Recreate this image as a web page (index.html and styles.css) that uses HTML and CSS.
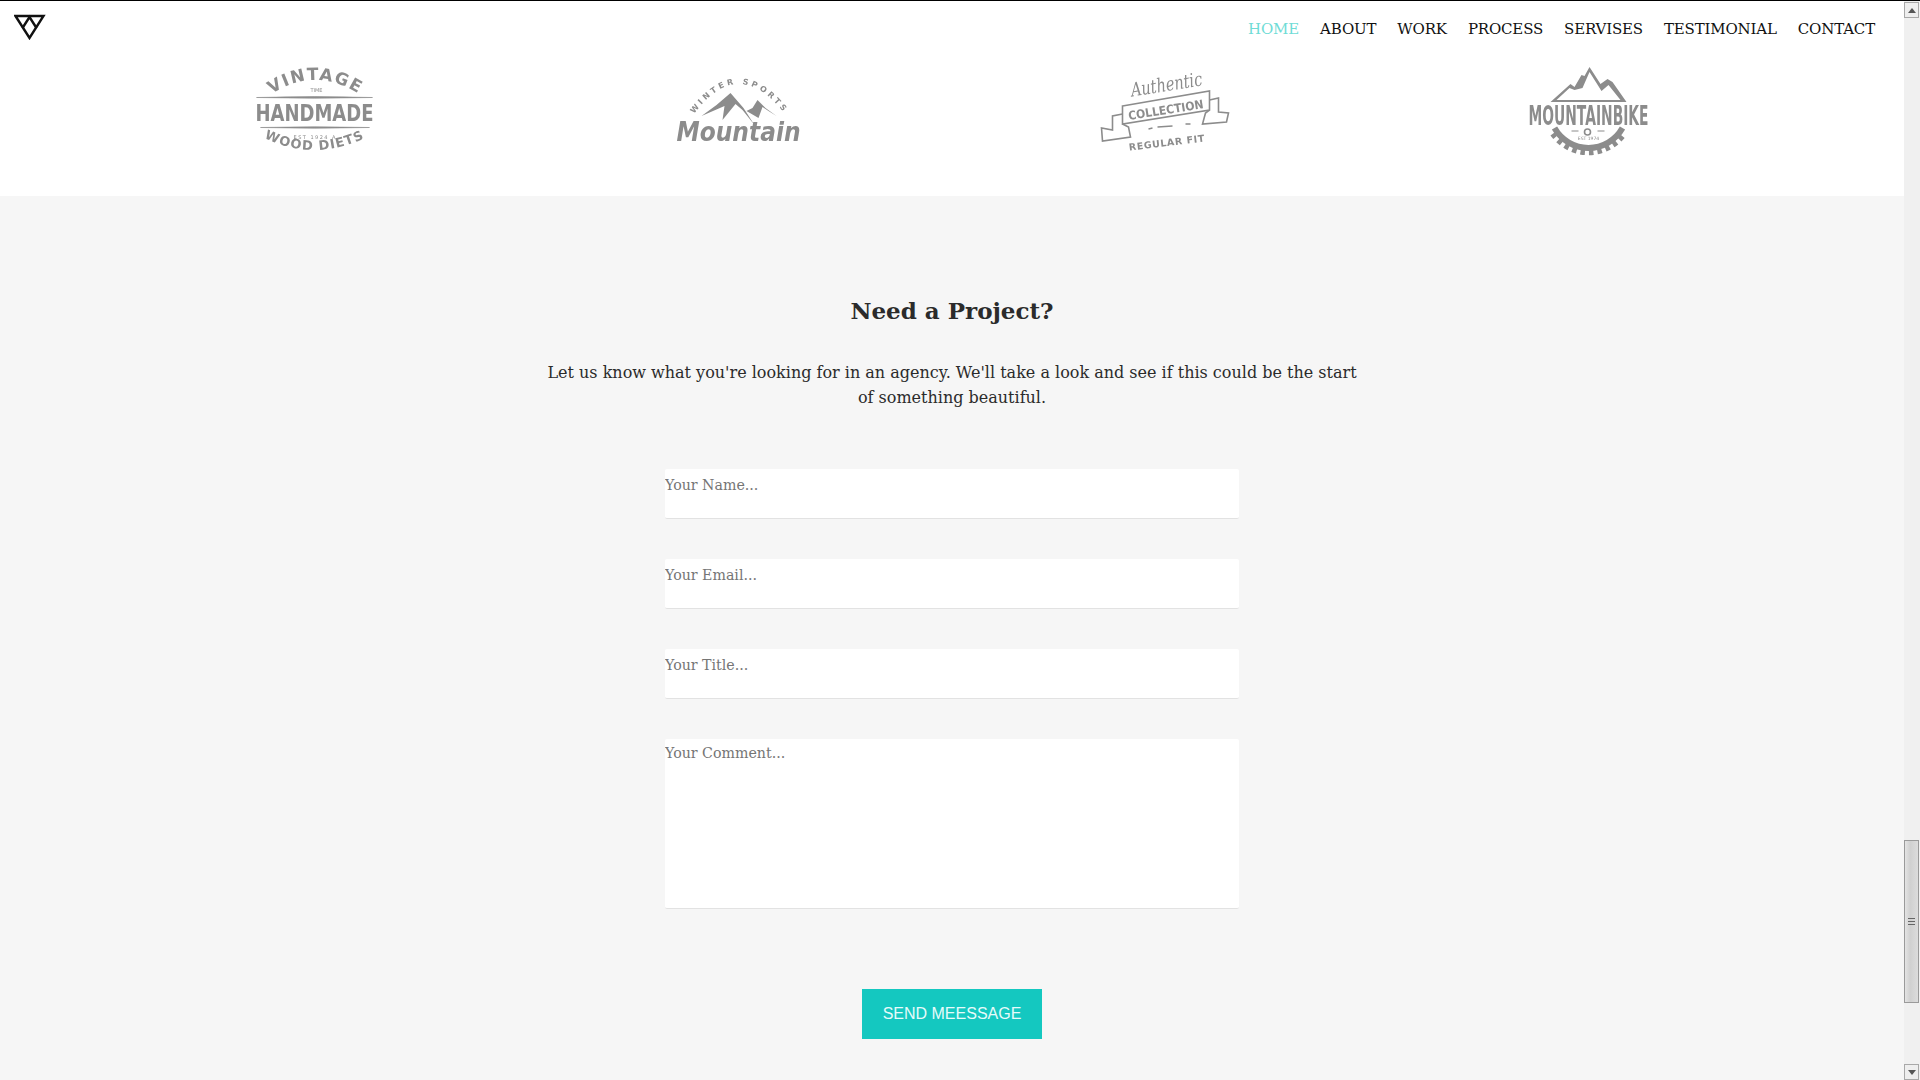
FILE: index.html
```html
<!DOCTYPE html>
<html lang="en">
<head>
  <meta charset="UTF-8">
  <meta name="viewport" content="width=device-width, initial-scale=1">
  <title>Need a Project?</title>
  <link rel="stylesheet" href="styles.css">
</head>
<body>
  <div class="page">
    <header class="topbar">
      <a class="brand" href="#">
        <svg width="32" height="26" viewBox="14 14 32 26" fill="none" stroke="#111" stroke-width="2.4">
          <path d="M15.5 16H43.5L29.5 38Z"/>
          <path d="M22.5 28L29.5 17L36.5 28"/>
        </svg>
      </a>
      <nav class="menu">
        <a class="active" href="#">HOME</a>
        <a href="#">ABOUT</a>
        <a href="#">WORK</a>
        <a href="#">PROCESS</a>
        <a href="#">SERVISES</a>
        <a href="#">TESTIMONIAL</a>
        <a href="#">CONTACT</a>
      </nav>
    </header>

    <section class="clients">
      <div class="client">
        <svg class="mark" width="140" height="96" viewBox="244.5 64 140 96">
          <path id="archVintage" d="M258 104Q314 56 372 104" fill="none"/>
          <path id="archWood" d="M256 134Q314 166 372 134" fill="none"/>
          <text class="t-heavy" font-size="17" letter-spacing="1.5"><textPath href="#archVintage" startOffset="50%" text-anchor="middle">VINTAGE</textPath></text>
          <text class="t-tiny" x="316" y="92" font-size="5" text-anchor="middle">TIME</text>
          <path d="M256 97.5Q314 95.5 372 97.5Q314 99 256 97.5ZM260 127.5Q314 126 369 127.5Q314 129 260 127.5Z" stroke="#8c8c8c" stroke-width=".6"/>
          <text class="t-heavy" x="255" y="121" font-size="23" textLength="118" lengthAdjust="spacingAndGlyphs">HANDMADE</text>
          <text class="t-tiny" x="314" y="139" font-size="5" textLength="42" text-anchor="middle">EST 1924 A</text>
          <text class="t-heavy" font-size="13" letter-spacing="1"><textPath href="#archWood" startOffset="50%" text-anchor="middle">WOOD DIETS</textPath></text>
        </svg>
      </div>
      <div class="client">
        <svg class="mark" width="140" height="96" viewBox="669.5 64 140 96">
          <path id="archWinter" d="M692 116Q738 52 786 116" fill="none"/>
          <text class="t-heavy" font-size="8" letter-spacing="3"><textPath href="#archWinter" startOffset="50%" text-anchor="middle">WINTER SPORTS</textPath></text>
          <path d="M701 116L716 105L730 93L743 108L754 125L742 110L735 104L722 120L724 106ZM746 111L752 108L757 100L765 108L776 116L768 111L762 107L758 118Z"/>
          <text class="t-brush" x="676" y="141" font-size="27" textLength="124" lengthAdjust="spacingAndGlyphs">Mountain</text>
        </svg>
      </div>
      <div class="client">
        <svg class="mark" width="140" height="96" viewBox="1094.5 64 140 96">
          <text class="t-script" x="1130" y="91" font-size="19" textLength="72" lengthAdjust="spacingAndGlyphs" transform="rotate(-9 1166 85)">Authentic</text>
          <g fill="none" stroke="#8c8c8c" stroke-width="1.6">
            <path d="M1122 114L1112 116V130L1101 128L1102 141L1130 137L1128 127L1122 124"/>
            <path d="M1209 100L1218 98V112L1228 113L1226 122L1202 124L1205 113L1209 110"/>
            <path fill="#fff" d="M1122 106L1209 91V110L1122 124Z"/>
          </g>
          <text class="t-heavy" x="1127" y="114" font-size="12" textLength="76" lengthAdjust="spacingAndGlyphs" transform="rotate(-9 1166 108)">COLLECTION</text>
          <text class="t-heavy" x="1166" y="146" font-size="9.5" letter-spacing=".6" text-anchor="middle" transform="rotate(-7 1166 140)">REGULAR FIT</text>
          <path d="M1148 129L1152 128M1157 127L1172 126M1185 124L1190 124" stroke="#8c8c8c" stroke-width="1.4"/>
        </svg>
      </div>
      <div class="client">
        <svg class="mark" width="140" height="96" viewBox="1519.5 64 140 96">
          <path d="M1550 102L1570 84L1574 87L1581 75L1584 76L1589 67L1600 84L1607 79L1612 82L1626 102ZM1556 100H1620L1608 85L1601 91L1589 72L1582 88L1574 90L1569 88Z" fill-rule="evenodd"/>
          <text class="t-heavy" x="1528" y="125" font-size="27" textLength="120" lengthAdjust="spacingAndGlyphs">MOUNTAINBIKE</text>
          <g fill="none" stroke="#8c8c8c">
            <path d="M1554 128A39 39 0 0 0 1622 128" stroke-width="6"/>
            <path d="M1552 134A44 44 0 0 0 1624 134" stroke-width="5" stroke-dasharray="4.5 4"/>
            <circle cx="1587" cy="132" r="3" stroke-width="1.6"/>
            <path d="M1571 131H1578M1597 131H1604" stroke-width="1.2"/>
          </g>
          <text class="t-tiny" x="1588" y="140" font-size="4.5" text-anchor="middle">EST 1974</text>
        </svg>
      </div>
    </section>

    <section class="contact">
      <h2>Need a Project?</h2>
      <p>Let us know what you're looking for in an agency. We'll take a look and see if this could be the start of something beautiful.</p>
      <form class="contact-form">
        <input type="text" placeholder="Your Name...">
        <input type="email" placeholder="Your Email...">
        <input type="text" placeholder="Your Title...">
        <textarea placeholder="Your Comment..."></textarea>
        <button type="button">SEND MEESSAGE</button>
      </form>
    </section>
  </div>

  <div class="scrollbar">
    <div class="sb-btn"><svg width="8" height="5" viewBox="0 0 8 5"><path d="M4 0L8 5H0Z" fill="#555"/></svg></div>
    <div class="sb-space"></div>
    <div class="sb-thumb"><span></span><span></span><span></span></div>
    <div class="sb-btn"><svg width="8" height="5" viewBox="0 0 8 5"><path d="M0 0H8L4 5Z" fill="#555"/></svg></div>
  </div>
</body>
</html>
```

FILE: styles.css
```css
:root {
  --teal: #14c8c0;
  --soft: #f6f6f6;
  --ink: #2b2b2b;
  --mark: #8c8c8c;
}

html, body {
  height: 100%;
}

body {
  margin: 0;
  height: 1080px;
  overflow: hidden;
  display: flex;
  border-top: 1px solid #000;
  box-sizing: border-box;
  font-family: "DejaVu Serif", serif;
  background-color: #fff;
  color: var(--ink);
}

.page {
  flex: 1;
  min-width: 0;
}

/* header */
.topbar {
  height: 54px;
  display: flex;
  justify-content: space-between;
  align-items: center;
  padding: 0 29px 0 14px;
}

.brand {
  display: block;
  height: 26px;
  margin-top: -3px;
}

.menu {
  display: flex;
  gap: 21px;
  font-size: 15px;
  letter-spacing: -0.17px;
  padding-top: 2px;
}

.menu a {
  color: #111;
  text-decoration: none;
}

.menu a.active {
  color: #6fdcd6;
}

/* client logos */
.clients {
  display: grid;
  grid-template-columns: repeat(4, 425px);
  justify-content: center;
  height: 141px;
  padding-top: 9px;
  box-sizing: border-box;
}

.client {
  display: flex;
  justify-content: center;
}

.mark {
  fill: var(--mark);
  filter: blur(0.35px);
}

.t-heavy {
  font-family: "DejaVu Sans", sans-serif;
  font-weight: bold;
}

.t-tiny {
  font-family: "DejaVu Sans", sans-serif;
}

.t-brush {
  font-family: "DejaVu Sans", sans-serif;
  font-style: italic;
  font-weight: bold;
}

.t-script {
  font-family: "DejaVu Serif", serif;
  font-style: italic;
}

/* contact */
.contact {
  background-color: var(--soft);
  height: 884px;
  padding-top: 96px;
  box-sizing: border-box;
  text-align: center;
}

.contact h2 {
  margin: 0;
  font-size: 23px;
  line-height: 38px;
  font-weight: bold;
}

.contact p {
  width: 820px;
  margin: 30px auto 0;
  font-size: 16px;
  line-height: 25px;
}

.contact-form {
  width: 574px;
  margin: 59px auto 0;
  display: flex;
  flex-direction: column;
  gap: 40px;
  align-items: center;
}

.contact-form input,
.contact-form textarea {
  display: block;
  width: 100%;
  box-sizing: border-box;
  border: none;
  border-bottom: 1px solid #e2e2e2;
  border-radius: 2px;
  background-color: #fff;
  padding: 4px 0 0;
  font-family: "DejaVu Serif", serif;
  font-size: 14.2px;
  line-height: 20px;
  color: #555;
  outline: none;
  resize: none;
}

.contact-form input {
  height: 50px;
  padding-bottom: 22px;
}

.contact-form textarea {
  height: 170px;
}

.contact-form button {
  width: 180px;
  height: 50px;
  margin-top: 40px;
  border: none;
  background-color: var(--teal);
  color: #e6fbfa;
  font-family: "Liberation Sans", sans-serif;
  font-size: 16px;
  cursor: pointer;
}

/* fake window scrollbar */
.scrollbar {
  width: 16px;
  display: flex;
  flex-direction: column;
  background-color: #f0f0f0;
}

.sb-btn {
  height: 16px;
  margin: 1px 1px 0 0;
  display: flex;
  align-items: center;
  justify-content: center;
  background-color: #eee;
  border: 1px solid #a8a8a8;
  box-sizing: border-box;
}

.sb-space {
  flex: 1;
}

.sb-thumb {
  height: 163px;
  margin: 0 1px 60px 0;
  box-sizing: border-box;
  border: 1px solid #9a9a9a;
  background: linear-gradient(to right, #e4e4e4, #d0d0d0 40%, #dcdcdc);
  display: flex;
  flex-direction: column;
  align-items: center;
  justify-content: center;
  gap: 2px;
}

.sb-thumb span {
  display: block;
  width: 7px;
  height: 1px;
  background-color: #666;
}
```
